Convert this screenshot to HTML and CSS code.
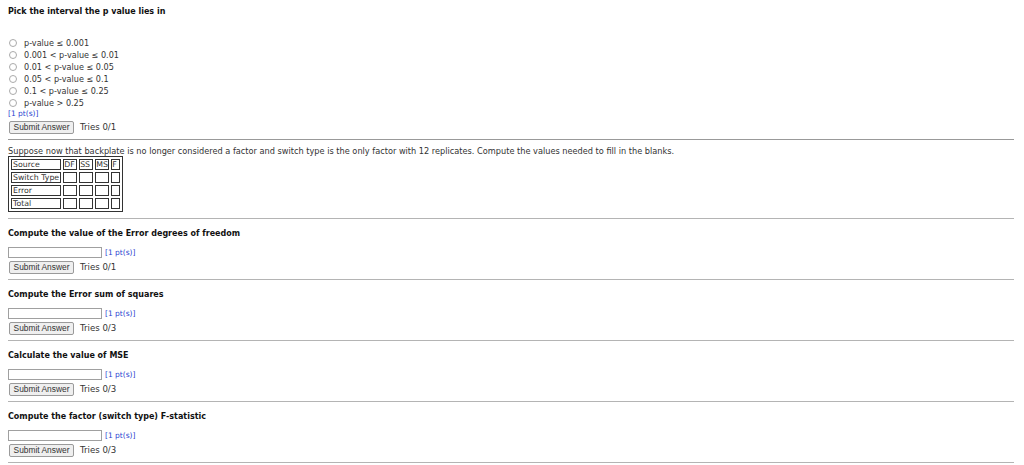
FILE: index.html
```html
<!DOCTYPE html>
<html>
<head>
<meta charset="utf-8">
<link rel="stylesheet" href="styles.css">
</head>
<body>
<div class="page">
  <div class="title">Pick the interval the p value lies in</div>
  <div class="options">
    <label class="opt"><span class="radio"></span>p-value ≤ 0.001</label>
    <label class="opt"><span class="radio"></span>0.001 &lt; p-value ≤ 0.01</label>
    <label class="opt"><span class="radio"></span>0.01 &lt; p-value ≤ 0.05</label>
    <label class="opt"><span class="radio"></span>0.05 &lt; p-value ≤ 0.1</label>
    <label class="opt"><span class="radio"></span>0.1 &lt; p-value ≤ 0.25</label>
    <label class="opt"><span class="radio"></span>p-value &gt; 0.25</label>
  </div>
  <div class="pts">[1 pt(s)]</div>
  <div class="actions"><span class="btn">Submit Answer</span><span class="tries">Tries 0/1</span></div>
  <div class="rule dark"></div>

  <div class="prompt">Suppose now that backplate is no longer considered a factor and switch type is the only factor with 12 replicates. Compute the values needed to fill in the blanks.</div>
  <table class="anova">
    <tr><td class="c0">Source</td><td>DF</td><td>SS</td><td>MS</td><td class="cf">F</td></tr>
    <tr><td class="c0">Switch Type</td><td></td><td></td><td></td><td class="cf"></td></tr>
    <tr><td class="c0">Error</td><td></td><td></td><td></td><td class="cf"></td></tr>
    <tr><td class="c0">Total</td><td></td><td></td><td></td><td class="cf"></td></tr>
  </table>
  <div class="rule first"></div>

  <div class="q">
    <div class="heading">Compute the value of the Error degrees of freedom</div>
    <div class="inrow"><span class="field"></span><span class="pts inl">[1 pt(s)]</span></div>
    <div class="actions"><span class="btn">Submit Answer</span><span class="tries">Tries 0/1</span></div>
    <div class="rule"></div>
  </div>
  <div class="q">
    <div class="heading">Compute the Error sum of squares</div>
    <div class="inrow"><span class="field"></span><span class="pts inl">[1 pt(s)]</span></div>
    <div class="actions"><span class="btn">Submit Answer</span><span class="tries">Tries 0/3</span></div>
    <div class="rule"></div>
  </div>
  <div class="q">
    <div class="heading">Calculate the value of MSE</div>
    <div class="inrow"><span class="field"></span><span class="pts inl">[1 pt(s)]</span></div>
    <div class="actions"><span class="btn">Submit Answer</span><span class="tries">Tries 0/3</span></div>
    <div class="rule"></div>
  </div>
  <div class="q">
    <div class="heading">Compute the factor (switch type) F-statistic</div>
    <div class="inrow"><span class="field"></span><span class="pts inl">[1 pt(s)]</span></div>
    <div class="actions"><span class="btn">Submit Answer</span><span class="tries">Tries 0/3</span></div>
    <div class="rule"></div>
  </div>
</div>
</body>
</html>
```

FILE: styles.css
```css
html, body {
  margin: 0;
  padding: 0;
  background: #fff;
}
.page {
  padding: 0 10px 0 8px;
  font-family: "DejaVu Sans", Verdana, sans-serif;
  font-size: 8px;
  color: #222;
}
.title {
  margin-top: 6px;
  height: 12px;
  line-height: 12px;
  font-weight: bold;
  font-size: 8px;
  color: #111;
}
.options {
  margin-top: 19px;
  display: flex;
  flex-direction: column;
}
.opt {
  display: flex;
  align-items: center;
  height: 12px;
  line-height: 12px;
  font-size: 8.1px;
  color: #333;
}
.radio {
  box-sizing: border-box;
  width: 8px;
  height: 8px;
  border: 1px solid #aaa;
  border-radius: 50%;
  margin: 0 7px 0 1px;
  background: #fff;
}
.pts {
  height: 9px;
  line-height: 9px;
  font-size: 7.5px;
  color: #2a3fd0;
}
.actions {
  margin-top: 2px;
  height: 14px;
  display: flex;
  align-items: center;
}
.btn {
  box-sizing: border-box;
  width: 65px;
  height: 13px;
  margin-left: 1px;
  border: 1px solid #9a9a9a;
  border-radius: 2px;
  background: #efefef;
  font-family: "Liberation Sans", Arial, sans-serif;
  font-size: 8.4px;
  line-height: 11px;
  text-align: center;
  color: #333;
}
.tries {
  margin-left: 6px;
  font-size: 8.6px;
  color: #333;
}
.rule {
  margin-top: 5px;
  height: 1px;
  background: #b4b4b4;
}
.rule.dark {
  background: #999;
}
.rule.first {
  margin-top: 6px;
}
.prompt {
  margin-top: 6px;
  height: 10px;
  line-height: 10px;
  font-size: 8.2px;
  color: #333;
}
.anova {
  border: 1px solid #333;
  border-spacing: 2px;
  border-collapse: separate;
  font-size: 7.8px;
  color: #333;
}
.anova td {
  border: 1px solid #333;
  height: 9px;
  padding: 0;
  line-height: 9px;
  width: 12px;
  white-space: nowrap;
  overflow: hidden;
}
.anova td.c0 {
  width: auto;
  padding: 0 1px;
}
.anova td.cf {
  width: 7px;
}
.q .heading {
  margin-top: 9px;
  height: 12px;
  line-height: 12px;
  font-weight: bold;
  font-size: 8px;
  color: #111;
}
.inrow {
  margin-top: 7px;
  height: 11px;
  display: flex;
  align-items: center;
}
.field {
  box-sizing: border-box;
  width: 94px;
  height: 11px;
  border: 1px solid #a0a0a0;
  background: #fff;
}
.pts.inl {
  margin-left: 3px;
}
```
